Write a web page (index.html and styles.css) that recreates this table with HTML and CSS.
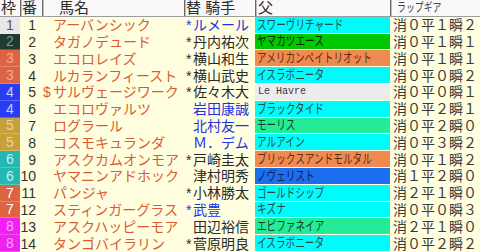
FILE: index.html
```html
<!DOCTYPE html>
<html lang="ja">
<head>
<meta charset="utf-8">
<title>出馬表</title>
<link rel="stylesheet" href="styles.css">
</head>
<body>
<div class="sheet">
  <div class="row head">
    <div class="c waku">枠</div>
    <div class="c ban">番</div>
    <div class="c name">馬名</div>
    <div class="c jockey">替 騎手</div>
    <div class="c sire">父</div>
    <div class="c lap"><span class="nar">ラップギア</span></div>
  </div>
  <div class="row">
    <div class="c waku w1">1</div><div class="c ban">1</div>
    <div class="c name"><span class="hm"></span>アーバンシック</div>
    <div class="c jockey blue"><span class="jm">*</span>ルメール</div>
    <div class="c sire cyan"><span class="nar">スワーヴリチャード</span></div>
    <div class="c lap">消０平１瞬２</div>
  </div>
  <div class="row">
    <div class="c waku w2">2</div><div class="c ban">2</div>
    <div class="c name"><span class="hm"></span>タガノデュード</div>
    <div class="c jockey"><span class="jm">*</span>丹内祐次</div>
    <div class="c sire green"><span class="nar">ヤマカツエース</span></div>
    <div class="c lap">消０平１瞬１</div>
  </div>
  <div class="row">
    <div class="c waku w3">3</div><div class="c ban">3</div>
    <div class="c name"><span class="hm"></span>エコロレイズ</div>
    <div class="c jockey"><span class="jm">*</span>横山和生</div>
    <div class="c sire orange"><span class="nar">アメリカンペイトリオット</span></div>
    <div class="c lap">消０平１瞬１</div>
  </div>
  <div class="row">
    <div class="c waku w3">3</div><div class="c ban">4</div>
    <div class="c name"><span class="hm"></span>ルカランフィースト</div>
    <div class="c jockey"><span class="jm">*</span>横山武史</div>
    <div class="c sire cyan"><span class="nar">イスラボニータ</span></div>
    <div class="c lap">消０平０瞬２</div>
  </div>
  <div class="row">
    <div class="c waku w4">4</div><div class="c ban">5</div>
    <div class="c name"><span class="hm">$</span>サルヴェージワーク</div>
    <div class="c jockey"><span class="jm">*</span>佐々木大</div>
    <div class="c sire grey latin">Le Havre</div>
    <div class="c lap">消０平０瞬１</div>
  </div>
  <div class="row">
    <div class="c waku w4">4</div><div class="c ban">6</div>
    <div class="c name"><span class="hm"></span>エコロヴァルツ</div>
    <div class="c jockey blue"><span class="jm"></span>岩田康誠</div>
    <div class="c sire cyan"><span class="nar">ブラックタイド</span></div>
    <div class="c lap">消０平２瞬１</div>
  </div>
  <div class="row">
    <div class="c waku w5">5</div><div class="c ban">7</div>
    <div class="c name"><span class="hm"></span>ログラール</div>
    <div class="c jockey blue"><span class="jm"></span>北村友一</div>
    <div class="c sire spring"><span class="nar">モーリス</span></div>
    <div class="c lap">消０平２瞬０</div>
  </div>
  <div class="row">
    <div class="c waku w5">5</div><div class="c ban">8</div>
    <div class="c name"><span class="hm"></span>コスモキュランダ</div>
    <div class="c jockey blue"><span class="jm"></span>Ｍ．デム</div>
    <div class="c sire cyan"><span class="nar">アルアイン</span></div>
    <div class="c lap">消０平３瞬２</div>
  </div>
  <div class="row">
    <div class="c waku w6">6</div><div class="c ban">9</div>
    <div class="c name"><span class="hm"></span>アスクカムオンモア</div>
    <div class="c jockey"><span class="jm">*</span>戸崎圭太</div>
    <div class="c sire orange"><span class="nar">ブリックスアンドモルタル</span></div>
    <div class="c lap">消０平１瞬２</div>
  </div>
  <div class="row">
    <div class="c waku w6">6</div><div class="c ban">10</div>
    <div class="c name"><span class="hm"></span>ヤマニンアドホック</div>
    <div class="c jockey"><span class="jm"></span>津村明秀</div>
    <div class="c sire blueb"><span class="nar">ノヴェリスト</span></div>
    <div class="c lap">消１平２瞬０</div>
  </div>
  <div class="row">
    <div class="c waku w7">7</div><div class="c ban">11</div>
    <div class="c name"><span class="hm"></span>パンジャ</div>
    <div class="c jockey"><span class="jm">*</span>小林勝太</div>
    <div class="c sire cyan"><span class="nar">ゴールドシップ</span></div>
    <div class="c lap">消２平１瞬０</div>
  </div>
  <div class="row">
    <div class="c waku w7">7</div><div class="c ban">12</div>
    <div class="c name"><span class="hm"></span>スティンガーグラス</div>
    <div class="c jockey blue"><span class="jm">*</span>武豊</div>
    <div class="c sire cyan"><span class="nar">キズナ</span></div>
    <div class="c lap">消０平０瞬３</div>
  </div>
  <div class="row">
    <div class="c waku w8">8</div><div class="c ban">13</div>
    <div class="c name"><span class="hm"></span>アスクハッピーモア</div>
    <div class="c jockey"><span class="jm"></span>田辺裕信</div>
    <div class="c sire spring"><span class="nar">エピファネイア</span></div>
    <div class="c lap">消２平１瞬０</div>
  </div>
  <div class="row">
    <div class="c waku w8">8</div><div class="c ban">14</div>
    <div class="c name"><span class="hm"></span>タンゴバイラリン</div>
    <div class="c jockey"><span class="jm">*</span>菅原明良</div>
    <div class="c sire cyan"><span class="nar">イスラボニータ</span></div>
    <div class="c lap">消０平２瞬２</div>
  </div>
</div>
</body>
</html>
```
FILE: styles.css
```css
html, body {
  margin: 0;
  padding: 0;
  background: #ffffe0;
}

.sheet {
  width: 480px;
  height: 252px;
  display: grid;
  grid-template-rows: repeat(15, 1fr);
  background: #ffffe0;
  font-family: "Liberation Sans", "Noto Sans CJK JP", sans-serif;
  font-size: 14px;
  color: #333;
  overflow: hidden;
}

.row {
  display: grid;
  grid-template-columns: 20px 22px 142px 71px 135px 90px;
  min-height: 0;
}

.c {
  display: flex;
  align-items: center;
  white-space: nowrap;
  line-height: 14px;
  min-height: 0;
  box-sizing: border-box;
}

/* header */
.head {
  background: #f9f9f9;
  border-bottom: 1px solid #9c9c9c;
}
.head .c {
  font-size: 15px;
  color: #2a2a2a;
  border-left: 1px solid #6a6a6a;
  box-shadow: inset 1px 0 0 #bdbdbd;
}
.head .waku {
  border-left: none;
  box-shadow: none;
  border-bottom: none;
  justify-content: flex-start;
  padding-left: 1px;
  background: transparent;
}
.head .ban {
  justify-content: flex-start;
  padding: 0 0 0 1px;
}
.head .name {
  padding-left: 16px;
}
.head .jockey {
  padding-left: 1px;
}
.head .sire {
  padding-left: 2px;
  margin-bottom: 0;
}
.head .lap {
  font-size: 12px;
  padding-left: 6px;
  color: #444;
}

/* narrow (condensed) text */
.nar {
  display: inline-block;
  transform: scaleX(0.74);
  transform-origin: left center;
}

/* frame */
.waku {
  justify-content: center;
  font-size: 14px;
  border-bottom: 1px solid rgba(255, 255, 255, 0.22);
}
.w1 { background: #e8e8e8; color: #555; }
.w2 { background: #1e3a32; color: #7f9590; }
.w3 { background: #dc6444; color: #f6a88c; }
.w4 { background: #2a3cf2; color: #c4ccff; }
.w5 { background: #c8a03a; color: rgba(255, 255, 255, 0.55); }
.w6 { background: #23b8b0; color: #c6f0f0; }
.w7 { background: #dc6440; color: #ffffff; }
.w8 { background: #f020f0; color: rgba(255, 255, 255, 0.6); }

/* number */
.ban {
  justify-content: flex-end;
  padding-right: 6px;
  color: #333;
}

/* horse name */
.name {
  color: #dc5a32;
  padding-left: 1px;
  overflow: hidden;
}
.hm {
  display: inline-block;
  width: 10px;
  flex: none;
}

/* jockey */
.jockey {
  color: #2a2a2a;
  padding-left: 2px;
}
.jockey.blue {
  color: #2233e0;
}
.jm {
  display: inline-block;
  width: 7px;
  flex: none;
}

/* sire */
.sire {
  font-size: 13px;
  padding-left: 2px;
  margin-bottom: 1px;
  color: #2d3b3b;
}
.sire.latin {
  font-family: "Liberation Mono", monospace;
  font-size: 10px;
  padding-left: 3px;
}
.cyan { background: #00fbfb; color: #2a4848; }
.green { background: #00c800; color: #102010; }
.orange { background: #ef8a50; color: #5a2c14; }
.grey { background: #ececec; color: #3a3a3a; }
.spring { background: #22ec98; color: #1a3a2a; }
.blueb { background: #1c6ef0; color: #0e2448; }

/* lap gear */
.lap {
  padding-left: 3px;
  color: #3a3a3a;
}
```
